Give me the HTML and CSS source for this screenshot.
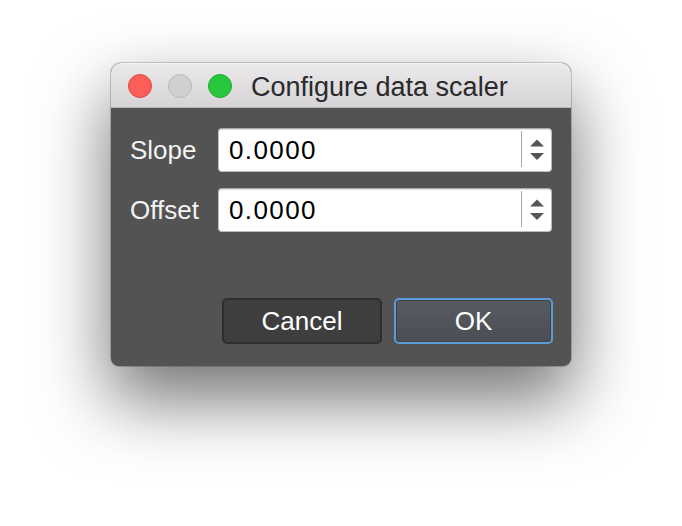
FILE: index.html
```html
<!DOCTYPE html>
<html>
<head>
<meta charset="utf-8">
<link rel="stylesheet" href="styles.css">
</head>
<body>
<div class="window">
  <div class="titlebar">
    <div class="lights">
      <span class="light red"></span>
      <span class="light grey"></span>
      <span class="light green"></span>
    </div>
    <div class="title">Configure data scaler</div>
  </div>
  <div class="content">
    <div class="form">
      <label class="label">Slope</label>
      <div class="spin">
        <span class="value">0.0000</span>
        <div class="stepper">
          <svg width="16" height="24" viewBox="0 0 16 24"><path d="M1 8.5 L8 1.5 L15 8.5 Z" fill="#555"/><path d="M1 15 L15 15 L8 22 Z" fill="#555"/></svg>
        </div>
      </div>
      <label class="label">Offset</label>
      <div class="spin">
        <span class="value">0.0000</span>
        <div class="stepper">
          <svg width="16" height="24" viewBox="0 0 16 24"><path d="M1 8.5 L8 1.5 L15 8.5 Z" fill="#555"/><path d="M1 15 L15 15 L8 22 Z" fill="#555"/></svg>
        </div>
      </div>
    </div>
    <div class="buttons">
      <button class="btn cancel">Cancel</button>
      <button class="btn ok">OK</button>
    </div>
  </div>
</div>
</body>
</html>
```
FILE: styles.css
```css
html, body {
  margin: 0;
  padding: 0;
  background: #ffffff;
}
body {
  width: 682px;
  height: 526px;
  display: flex;
  justify-content: center;
  align-items: flex-start;
  padding-top: 63px;
  box-sizing: border-box;
  font-family: "Liberation Sans", Arial, sans-serif;
}
.window {
  width: 460px;
  height: 303px;
  border-radius: 10px 10px 8px 8px;
  overflow: hidden;
  background: #535353;
  display: flex;
  flex-direction: column;
  box-shadow: 0 0 0 1px rgba(0,0,0,0.18), 0 32px 70px 2px rgba(0,0,0,0.55);
}
.titlebar {
  height: 43px;
  flex: none;
  display: flex;
  align-items: center;
  background: linear-gradient(#ebe9eb, #d5d3d5);
  border-top: 1px solid #f4f4f4;
  border-bottom: 1px solid #b9b7b9;
  box-sizing: content-box;
}
.lights {
  display: flex;
  gap: 16px;
  padding-left: 17px;
}
.light {
  width: 24px;
  height: 24px;
  border-radius: 50%;
  box-sizing: border-box;
  display: block;
}
.red { background: #fd5e57; border: 1px solid #e1453e; }
.grey { background: #d1d0d1; border: 1px solid #bbbabb; }
.green { background: #29c740; border: 1px solid #1cab2b; }
.title {
  margin-left: 19px;
  font-size: 27px;
  color: #2a2a2a;
  padding-top: 3px;
}
.content {
  flex: 1;
  display: flex;
  flex-direction: column;
  padding: 20px 18px 22px 19px;
}
.form {
  display: grid;
  grid-template-columns: 76px 1fr;
  column-gap: 12px;
  row-gap: 16px;
  align-items: center;
  padding-right: 1px;
}
.label {
  font-size: 26px;
  color: #f2f2f2;
}
.spin {
  height: 44px;
  box-sizing: border-box;
  background: #ffffff;
  border: 1px solid #bdbdbd;
  border-top-color: #a9a9a9;
  border-radius: 4px;
  display: flex;
  align-items: stretch;
  box-shadow: inset 0 1px 1px rgba(0,0,0,0.12);
}
.value {
  flex: 1;
  display: flex;
  align-items: center;
  padding-left: 10px;
  font-size: 26px;
  letter-spacing: 1.4px;
  color: #000;
}
.stepper {
  width: 29px;
  margin: 2px 0 4px 0;
  border-left: 1.5px solid #a8a8a8;
  display: flex;
  align-items: center;
  justify-content: center;
}
.stepper svg { display: block; margin-top: 2px; }
.buttons {
  margin-top: auto;
  display: flex;
  justify-content: flex-end;
  gap: 12px;
}
.btn {
  height: 46px;
  border-radius: 5px;
  font-family: "Liberation Sans", Arial, sans-serif;
  font-size: 26px;
  color: #ffffff;
  padding: 0;
  box-sizing: border-box;
}
.cancel {
  width: 160px;
  background: #3e3e3e;
  border: 2px solid #2e2e2e;
}
.ok {
  width: 159px;
  background: linear-gradient(#575b62, #4b4e54);
  border: 2px solid #5d9ad6;
  box-shadow: inset 0 0 0 1px #3e4248;
}
```
